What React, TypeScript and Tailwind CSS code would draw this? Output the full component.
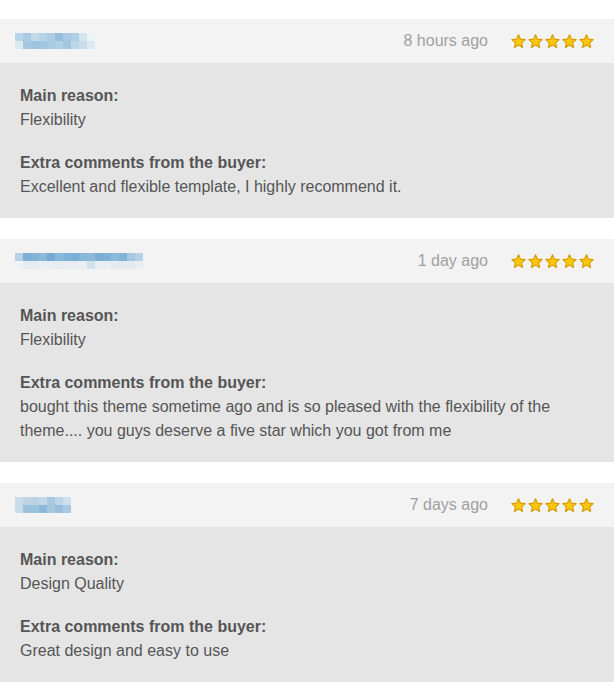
import React from "react";

const Star = () => (
  <svg width="17" height="17" viewBox="0 0 24 24">
    <polygon
      points="12,2.6 14.8,8.7 21.4,9.4 16.4,13.9 17.8,20.5 12,17.1 6.2,20.5 7.6,13.9 2.6,9.4 9.2,8.7"
      fill="#fbc80a"
      stroke="#d99a00"
      strokeWidth="1.6"
      strokeLinejoin="round"
    />
  </svg>
);

type Pix = { top: string[]; bot: string[] };

const Pixel = ({ p }: { p: Pix }) => {
  const bw = 8;
  const w = p.top.length * bw;
  return (
    <svg width={w} height={16} viewBox={`0 0 ${w} 16`}>
      {p.top.map((c, i) => (
        <rect key={"t" + i} x={i * bw} y={0} width={bw + 0.2} height={8} fill={c} />
      ))}
      {p.bot.map((c, i) => (
        <rect key={"b" + i} x={i * bw} y={8} width={bw + 0.2} height={8} fill={c} />
      ))}
    </svg>
  );
};

const pix1: Pix = {
  top: ["#b9d4e8", "#a9cbe3", "#c2d9ea", "#b7d3e7", "#aecde4", "#95bddd", "#aacbe3", "#b0cfe5", "#d4e4ef", "#eef3f7"],
  bot: ["#dde9f2", "#a6c8e2", "#9ec3df", "#a3c6e0", "#a9cae2", "#b1cfe4", "#a0c5e0", "#bdd6e8", "#c8dceb", "#dbe8f2"],
};
const pix2: Pix = {
  top: ["#b7d2e6", "#7eb0d6", "#86b4d8", "#8ab9da", "#75aad3", "#8ab9da", "#7eb2d7", "#7aafd5", "#89b8d9", "#8cb9da", "#78add4", "#7eb1d6", "#8cbad9", "#7fb2d6", "#a3c7e0", "#b4d1e6"],
  bot: ["#f0f3f5", "#e6edf2", "#e6edf2", "#eaeff3", "#e8eef3", "#e6edf2", "#e8eef3", "#e8eef3", "#e8eef3", "#d1e2ee", "#e8eef3", "#e8eef3", "#e3ebf1", "#e3ebf1", "#e3ebf1", "#e8eef3"],
};
const pix3: Pix = {
  top: ["#c9dbe8", "#c0d6e6", "#b9d2e4", "#c4d9e7", "#a7c8df", "#c0d6e6", "#cfe0ec"],
  bot: ["#c9dbe8", "#99c1de", "#9cc3de", "#8ab9da", "#a6c8e0", "#97bfdd", "#a8cae2"],
};

type Review = { pix: Pix; time: string; reason: string; comment: string };

const reviews: Review[] = [
  { pix: pix1, time: "8 hours ago", reason: "Flexibility", comment: "Excellent and flexible template, I highly recommend it." },
  {
    pix: pix2,
    time: "1 day ago",
    reason: "Flexibility",
    comment:
      "bought this theme sometime ago and is so pleased with the flexibility of the theme.... you guys deserve a five star which you got from me",
  },
  { pix: pix3, time: "7 days ago", reason: "Design Quality", comment: "Great design and easy to use" },
];

export default function App() {
  return (
    <div
      className="w-[614px] min-h-[694px] bg-white pt-[19px] flex flex-col gap-[21px] text-[#555555]"
      style={{ fontFamily: '"Liberation Sans", Arial, Helvetica, sans-serif' }}
    >
      {reviews.map((r, i) => (
        <div key={i} className="flex flex-col">
          <div className="h-[44px] bg-[#f3f3f3] flex items-center pl-[15px] pr-[19px]">
            <Pixel p={r.pix} />
            <div className="ml-auto text-[16px] text-[#a0a0a0]">{r.time}</div>
            <div className="ml-[22px] flex">
              <Star />
              <Star />
              <Star />
              <Star />
              <Star />
            </div>
          </div>
          <div className="bg-[#e5e5e5] px-[20px] pt-[21px] pb-[19px] text-[16px] leading-[24px]">
            <div className="font-bold">Main reason:</div>
            <div>{r.reason}</div>
            <div className="font-bold mt-[19px]">Extra comments from the buyer:</div>
            <div className="pr-[30px]">{r.comment}</div>
          </div>
        </div>
      ))}
    </div>
  );
}
